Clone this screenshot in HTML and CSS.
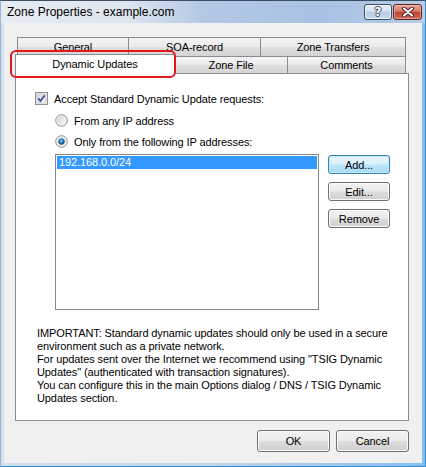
FILE: index.html
```html
<!DOCTYPE html>
<html>
<head>
<meta charset="utf-8">
<title>Zone Properties - example.com</title>
<link rel="stylesheet" href="styles.css">
</head>
<body>
<div class="window">
  <div class="titlebar">
    <span class="title">Zone Properties - example.com</span>
    <div class="caption-btns">
      <span class="cbtn help">?</span>
      <span class="cbtn close">
        <svg width="14" height="10" viewBox="0 0 14 10">
          <path d="M3 1.5 L11 8.5 M11 1.5 L3 8.5" stroke="#4a2a28" stroke-width="4" stroke-linecap="round"/>
          <path d="M3 1.5 L11 8.5 M11 1.5 L3 8.5" stroke="#ffffff" stroke-width="2" stroke-linecap="round"/>
        </svg>
      </span>
    </div>
  </div>
  <div class="client">
    <div class="tabctl">
      <div class="tabrow back">
        <div class="tab t-general">General</div>
        <div class="tab t-soa">SOA-record</div>
        <div class="tab t-zt">Zone Transfers</div>
      </div>
      <div class="tabrow front">
        <div class="tab t-dyn selected">Dynamic Updates</div>
        <div class="tab t-zf">Zone File</div>
        <div class="tab t-com">Comments</div>
      </div>
      <div class="panel">
        <label class="row">
          <svg class="check" width="13" height="13" viewBox="0 0 13 13">
            <defs>
              <linearGradient id="cbg" x1="0" y1="0" x2="1" y2="1">
                <stop offset="0" stop-color="#d6d9de"/>
                <stop offset="1" stop-color="#f8f8f8"/>
              </linearGradient>
            </defs>
            <rect x="0.5" y="0.5" width="12" height="12" fill="#f4f4f4" stroke="#8e8f8f"/>
            <rect x="2" y="2" width="9" height="9" fill="url(#cbg)" stroke="#b7bbc2" stroke-width="0.6"/>
            <path d="M3.2 6.4 L5.4 8.9 L9.8 3.4" fill="none" stroke="#4b5b94" stroke-width="1.9"/>
          </svg>
          <span>Accept Standard Dynamic Update requests:</span>
        </label>
        <label class="row indent r1">
          <svg class="radio" width="13" height="13" viewBox="0 0 13 13">
            <defs>
              <linearGradient id="rbg" x1="0" y1="0" x2="1" y2="1">
                <stop offset="0" stop-color="#cfd2d6"/>
                <stop offset="1" stop-color="#fbfbfb"/>
              </linearGradient>
            </defs>
            <circle cx="6.5" cy="6.5" r="5.8" fill="#f3f3f3" stroke="#8e8f8f"/>
            <circle cx="6.5" cy="6.5" r="4.2" fill="url(#rbg)"/>
          </svg>
          <span>From any IP address</span>
        </label>
        <label class="row indent r2">
          <svg class="radio" width="13" height="13" viewBox="0 0 13 13">
            <defs>
              <radialGradient id="rsel" cx="0.45" cy="0.4" r="0.6">
                <stop offset="0" stop-color="#9fd6f7"/>
                <stop offset="0.45" stop-color="#2c7fc4"/>
                <stop offset="1" stop-color="#15427a"/>
              </radialGradient>
            </defs>
            <circle cx="6.5" cy="6.5" r="5.8" fill="#f3f3f3" stroke="#8e8f8f"/>
            <circle cx="6.5" cy="6.5" r="4.2" fill="#d9dde2"/>
            <circle cx="6.5" cy="6.5" r="3.1" fill="url(#rsel)"/>
          </svg>
          <span>Only from the following IP addresses:</span>
        </label>
        <div class="listarea">
          <div class="listbox">
            <div class="item sel">192.168.0.0/24</div>
          </div>
          <div class="sidebtns">
            <span class="btn default">Add...</span>
            <span class="btn">Edit...</span>
            <span class="btn">Remove</span>
          </div>
        </div>
        <p class="note">IMPORTANT: Standard dynamic updates should only be used in a secure<br>environment such as a private network.<br>For updates sent over the Internet we recommend using "TSIG Dynamic<br>Updates" (authenticated with transaction signatures).<br>You can configure this in the main Options dialog / DNS / TSIG Dynamic<br>Updates section.</p>
      </div>
      <div class="highlight"></div>
    </div>
    <div class="footer">
      <span class="btn big">OK</span>
      <span class="btn big">Cancel</span>
    </div>
  </div>
</div>
</body>
</html>
```
FILE: styles.css
```css
html, body {
  margin: 0;
  padding: 0;
  background: #f0f0f0;
}
body {
  font-family: "Liberation Sans", Arial, sans-serif;
  font-size: 11px;
  color: #000;
}
.window {
  width: 426px;
  height: 467px;
  box-sizing: border-box;
  border: 1px solid #2f8ed8;
  border-top-color: #3f4f63;
  border-left-color: #9fb6d2;
  background: linear-gradient(to right, #d3dfec 0%, #c2d4ea 50%, #86bfee 100%);
  display: flex;
  flex-direction: column;
}
.titlebar {
  height: 22px;
  flex: none;
  display: flex;
  align-items: flex-start;
  justify-content: space-between;
  padding: 0 3px 0 6px;
  background: linear-gradient(to right, #e7ecf2 0%, #dde5ee 30%, #b3c8e5 48%, #a9c1e3 75%, #b5cbe7 100%);
}
.title {
  font-size: 12px;
  line-height: 22px;
  color: #000;
}
.caption-btns {
  display: flex;
  gap: 1px;
  margin-top: 3px;
}
.cbtn {
  height: 16px;
  box-sizing: border-box;
  border: 1px solid #3d4f68;
  border-radius: 3px;
  display: flex;
  align-items: center;
  justify-content: center;
}
.help {
  width: 28px;
  background: linear-gradient(#e9f0f8 0%, #d4e0ef 45%, #b8cbe4 50%, #c9daee 100%);
  box-shadow: inset 0 0 0 1px rgba(255,255,255,0.6);
  color: #fff;
  font-family: "DejaVu Sans", sans-serif;
  font-weight: bold;
  font-size: 12px;
  line-height: 14px;
  text-shadow: -1px 0 #3c4a60, 1px 0 #3c4a60, 0 -1px #3c4a60, 0 1px #3c4a60;
}
.close {
  width: 29px;
  border-color: #5e2520;
  background: linear-gradient(#e8a597 0%, #d57b6c 45%, #c0422f 50%, #d0685a 100%);
  box-shadow: inset 0 0 0 1px rgba(255,220,210,0.45);
}
.close svg { display: block; }

.client {
  flex: 1;
  margin: 0 3px 3px 3px;
  background: #f0f0f0;
  display: flex;
  flex-direction: column;
  padding: 14px 13px 0 11px;
  letter-spacing: -0.1px;
}
.tabctl {
  position: relative;
  display: flex;
  flex-direction: column;
}
.tabrow {
  display: flex;
  margin-left: 2px;
  width: 389px;
  align-items: flex-start;
}
.tab {
  box-sizing: border-box;
  border: 1px solid #898c95;
  border-bottom: none;
  background: linear-gradient(#f3f3f3 0%, #ebebeb 50%, #dedede 52%, #d4d4d4 100%);
  text-align: center;
  white-space: nowrap;
}
.tab + .tab { border-left: none; }
.back .tab { height: 19px; line-height: 18px; }
.front .tab { height: 17px; line-height: 16px; }
.t-general { width: 112px; }
.t-soa { width: 132px; }
.t-zt { width: 145px; }
.t-dyn { width: 158px; }
.t-zf { width: 113px; border-left: 1px solid #898c95; }
.t-com { width: 118px; }
.tab.selected {
  position: relative;
  z-index: 2;
  width: 160px;
  height: 20px;
  margin: -2px 0 -1px -2px;
  line-height: 19px;
  background: #fff;
}
.tab.selected + .tab { border-left: none; }
.panel {
  position: relative;
  z-index: 1;
  width: 394px;
  height: 348px;
  box-sizing: border-box;
  border: 1px solid #898c95;
  background: #fff;
  display: flex;
  flex-direction: column;
  padding: 18px 0 15px 19px;
}
.row {
  display: flex;
  align-items: center;
  height: 13px;
  gap: 6px;
  white-space: nowrap;
}
.row svg { flex: none; display: block; }
.indent { margin-left: 20px; }
.r1 { margin-top: 9px; }
.r2 { margin-top: 8px; }
.listarea {
  display: flex;
  margin: 6px 0 0 20px;
  gap: 9px;
  align-items: flex-start;
}
.listbox {
  width: 264px;
  height: 156px;
  box-sizing: border-box;
  border: 1px solid #828790;
  background: #fff;
  padding: 1px;
}
.item {
  height: 13px;
  line-height: 13px;
  padding-left: 2px;
}
.item.sel {
  background: #3399ff;
  color: #fff;
}
.sidebtns {
  display: flex;
  flex-direction: column;
  gap: 8px;
  margin-top: 1px;
}
.btn {
  box-sizing: border-box;
  width: 62px;
  height: 19px;
  border: 1px solid #707070;
  border-radius: 3px;
  background: linear-gradient(#f2f2f2 0%, #ebebeb 48%, #dddddd 52%, #cfcfcf 100%);
  box-shadow: inset 0 0 0 1px #fbfbfb;
  display: flex;
  align-items: center;
  justify-content: center;
  white-space: nowrap;
}
.btn.default {
  border-color: #3c7fb1;
  background: linear-gradient(#eaf6fd 0%, #d9f0fc 48%, #bee6fd 52%, #a7d9f5 100%);
  box-shadow: inset 0 0 0 1px #c6e8fb;
}
.note {
  margin: auto 0 0 2px;
  line-height: 13px;
  white-space: nowrap;
}
.highlight {
  position: absolute;
  left: -5px;
  top: 13px;
  width: 166px;
  height: 28px;
  box-sizing: border-box;
  border: 2px solid #e0191b;
  border-radius: 6px;
  z-index: 3;
  pointer-events: none;
}
.footer {
  display: flex;
  justify-content: flex-end;
  gap: 6px;
  margin-top: 9px;
  width: 394px;
}
.btn.big {
  width: 73px;
  height: 22px;
}
```
